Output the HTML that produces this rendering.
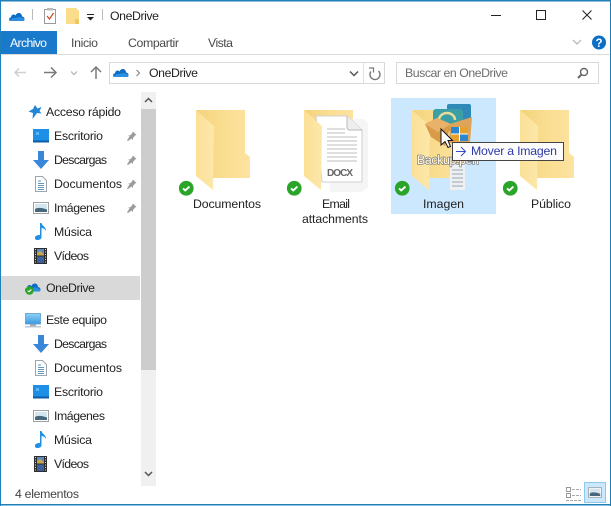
<!DOCTYPE html>
<html><head><meta charset="utf-8"><title>OneDrive</title>
<style>
html,body{margin:0;padding:0;background:#fff;overflow:hidden}
svg{display:block}
text{font-family:"Liberation Sans",sans-serif;font-size:12.3px;fill:#222}
.r{fill:#4a4a4a}
</style></head><body>
<svg width="611" height="506" viewBox="0 0 611 506" xmlns="http://www.w3.org/2000/svg">
<defs>
<linearGradient id="fb" x1="0" x2="1" y1="0" y2="0"><stop offset="0" stop-color="#f3d27a"/><stop offset=".45" stop-color="#f9dd8f"/><stop offset="1" stop-color="#fce3a0"/></linearGradient>
<linearGradient id="ff" x1="0" x2="1" y1="0" y2="0"><stop offset="0" stop-color="#fbe096"/><stop offset="1" stop-color="#fde8aa"/></linearGradient>
<linearGradient id="sky" x1="0" x2="0" y1="0" y2="1"><stop offset="0" stop-color="#8fd0f6"/><stop offset="1" stop-color="#3a9be0"/></linearGradient>
<symbol id="cloud" viewBox="0 0 16 10" overflow="visible"><path d="M1.500 10C-.5 10-.5 6.500 2 6.200C2.500 3 5.500 3 6.500 4.500C8 .5 13 1.500 13 5.500C16 5.500 16.500 10 13.500 10Z" fill="#0f6cc4"/><path d="M.500 10C1 8 4 6.500 7 7C9 5.500 12 5.500 13 7C15 7 16 8.500 15 10Z" fill="#2a8fe0"/></symbol>
<symbol id="desk" viewBox="0 0 16 14" overflow="visible"><rect x="0" y="0" width="16" height="13" fill="#1c8fe6"/><rect x="0" y="11.500" width="16" height="2" fill="#0b5ea8"/><path d="M3 3h3v3h-3z" fill="#5cb5f0"/></symbol>
<symbol id="down" viewBox="0 0 16 18" overflow="visible"><path d="M5 0h6v9h5L8 18 0 9h5z" fill="#3a86d8"/></symbol>
<symbol id="doc" viewBox="0 0 12 16" overflow="visible"><path d="M.5.500h7l4 4v11H.500z" fill="#fff" stroke="#9aa5ad"/><path d="M3 5h3M3 7.500h6M3 9.500h6M3 11.500h6M3 13.500h6" stroke="#5f95b8"/></symbol>
<symbol id="img" viewBox="0 0 16 12" overflow="visible"><rect x=".5" y=".5" width="15" height="11" fill="#fff" stroke="#9aa1a7"/><rect x="2" y="2" width="12" height="8" fill="#d3e6f0"/><path d="M2 7C5 5 10 6 14 7.500V10H2z" fill="#48677d"/></symbol>
<symbol id="note" viewBox="0 0 12 17" overflow="visible"><path d="M5 0h1.500c.5 3 4.500 3.500 4.500 8C10 6 8 5 6.500 5v9c0 2-2 3-4 3S0 16 0 14.500 2 12 5 12z" fill="#1e90e8"/></symbol>
<symbol id="film" viewBox="0 0 13 16" overflow="visible"><rect width="13" height="16" fill="#2d2d2d"/><rect x="3" y="1" width="7" height="6.500" fill="#5f86c4"/><rect x="3" y="8.500" width="7" height="6.500" fill="#3d5f9c"/><path d="M3 5l3-2 4 3v1.500H3z" fill="#c8a94a"/><path d="M1 1.500h1M1 4h1M1 6.500h1M1 9h1M1 11.500h1M1 14h1M11 1.500h1M11 4h1M11 6.500h1M11 9h1M11 11.500h1M11 14h1" stroke="#ddd"/></symbol>
<symbol id="pin" viewBox="0 0 10 10" overflow="visible"><path d="M6 .5l3.500 3.500-1.500.5-2 2.500v2L4.500 7.500 1 10 0 9.500 2.500 5.500 1 4.500h2l2-2z" fill="#9a9a9a"/></symbol>
<symbol id="check" viewBox="0 0 16 16" overflow="visible"><circle cx="8" cy="8" r="7.600" fill="#2aa52a"/><path d="M4.700 8.200L7 10.300l4.300-4" fill="none" stroke="#fff" stroke-width="2"/></symbol>
<symbol id="folder" viewBox="0 0 56 82" overflow="visible">
<path d="M0 0H49V43L54 47V68H17V60L0 60Z" fill="url(#fb)"/>
<path d="M0 0L18 16 17 80 0 66Z" fill="url(#ff)"/>
</symbol>
</defs>

<!-- window frame -->
<rect x="0" y="0" width="611" height="1.500" fill="#1f7fb9"/>
<rect x="0" y="0" width="1" height="506" fill="#1f7fb9"/>
<rect x="610" y="0" width="1" height="506" fill="#1f7fb9"/>
<rect x="0" y="504" width="611" height="1.500" fill="#1f7fb9"/>

<!-- title bar -->
<use href="#cloud" x="9" y="11" width="16" height="10"/>
<rect x="32" y="9" width="1" height="11" fill="#bbb"/>
<path d="M44.500 9.500h11v14h-11z" fill="#fff" stroke="#9a9a9a"/>
<rect x="47" y="8" width="6" height="2.500" fill="#b9b9b9"/>
<path d="M47 16l2.500 3 4-6" fill="none" stroke="#d0502d" stroke-width="1.300"/>
<path d="M66 8h10l3 3v13H66z" fill="#fbdc8a"/><path d="M75 19h4v5h-4z" fill="#efc766"/>
<rect x="87" y="14" width="7" height="1" fill="#222"/><path d="M87 17h7l-3.500 3.500z" fill="#222"/>
<rect x="102" y="9" width="1" height="11" fill="#bbb"/>
<text x="110" y="20" textLength="49">OneDrive</text>

<!-- window buttons -->
<rect x="491" y="15" width="10" height="1" fill="#222"/>
<rect x="536.500" y="10.500" width="9" height="9" fill="none" stroke="#222"/>
<path d="M582.500 10.500l9 9M591.500 10.500l-9 9" stroke="#222" stroke-width="1"/>

<!-- ribbon -->
<rect x="1" y="31" width="56" height="23" fill="#1979ca"/>
<text x="10" y="47" textLength="37" style="fill:#fff">Archivo</text>
<text class="r" x="71" y="47" textLength="27">Inicio</text>
<text class="r" x="128" y="47" textLength="51">Compartir</text>
<text class="r" x="208" y="47" textLength="25">Vista</text>
<rect x="1" y="54" width="609" height="1" fill="#dadbdc"/>
<path d="M573 40l4 4 4-4" fill="none" stroke="#b5bcc2" stroke-width="1.300"/>
<circle cx="599" cy="42.500" r="7" fill="#0b6fc6"/>
<text x="599" y="47" text-anchor="middle" style="font-size:11.500px;font-weight:bold;fill:#fff">?</text>

<!-- nav -->
<path d="M15 72.500h11M19 68.500l-4 4 4 4" fill="none" stroke="#d0d0d0" stroke-width="1.500"/>
<path d="M44 72.500h12M51 67.500l5 5-5 5" fill="none" stroke="#7a7a7a" stroke-width="1.500"/>
<path d="M71 71.500l3 3 3-3" fill="none" stroke="#b0b0b0" stroke-width="1.200"/>
<path d="M96 79V67M91 72l5-5 5 5" fill="none" stroke="#7a7a7a" stroke-width="1.500"/>
<rect x="109.500" y="62.500" width="275" height="21" fill="#fff" stroke="#d9d9d9"/>
<use href="#cloud" x="113" y="67" width="16" height="10"/>
<path d="M136.500 70l3 3-3 3" fill="none" stroke="#8a8a8a" stroke-width="1.200"/>
<text x="149" y="77" textLength="49">OneDrive</text>
<path d="M350 71.500l4 4 4-4" fill="none" stroke="#555" stroke-width="1.500"/>
<rect x="363" y="63" width="1" height="20" fill="#e2e2e2"/>
<path d="M378.500 70A5 5 0 1 1 371 70.500" fill="none" stroke="#777" stroke-width="1.400" transform="translate(0,1)"/>
<path d="M369 68h4.500v4.500" fill="none" stroke="#777" stroke-width="1.200"/>
<rect x="396.500" y="62.500" width="202" height="21" fill="#fff" stroke="#d9d9d9"/>
<text x="405" y="77" textLength="103" style="fill:#6d6d6d">Buscar en OneDrive</text>
<circle cx="584" cy="72" r="3.500" fill="none" stroke="#666" stroke-width="1.400"/>
<path d="M581.500 74.500L578 78" stroke="#666" stroke-width="2"/>

<!-- sidebar -->
<rect x="1" y="276" width="139" height="24" fill="#d9d9d9"/>
<rect x="141" y="92" width="15" height="394" fill="#f0f0f0"/>
<rect x="141" y="109" width="15" height="261" fill="#cdcdcd"/>
<path d="M145 102l3.500-3.500 3.500 3.500" fill="none" stroke="#555" stroke-width="1.500"/>
<path d="M145 472l3.500 3.500 3.500-3.500" fill="none" stroke="#555" stroke-width="1.500"/>

<path d="M35 105l2.500 3.500 4-1.500-2 4 2 2.500-4.500-.5-4.500 6 .5-6-4.500-1.500 4.500-2.500z" fill="#1f86d8"/>
<text x="46" y="116" textLength="75">Acceso rápido</text>
<use href="#desk" x="33" y="129" width="16" height="14"/><text x="54" y="140" textLength="49">Escritorio</text><use href="#pin" x="127" y="131" width="10" height="10"/>
<use href="#down" x="33" y="151" width="16" height="18"/><text x="54" y="164" textLength="53">Descargas</text><use href="#pin" x="127" y="155" width="10" height="10"/>
<use href="#doc" x="35" y="176" width="12" height="16"/><text x="54" y="188" textLength="68">Documentos</text><use href="#pin" x="127" y="179" width="10" height="10"/>
<use href="#img" x="33" y="202" width="16" height="12"/><text x="54" y="212" textLength="51">Imágenes</text><use href="#pin" x="127" y="203" width="10" height="10"/>
<use href="#note" x="35" y="223" width="12" height="17"/><text x="54" y="236" textLength="38">Música</text>
<use href="#film" x="34" y="248" width="13" height="16"/><text x="54" y="260" textLength="35">Vídeos</text>

<use href="#cloud" x="25" y="281" width="16" height="11"/>
<use href="#check" x="25" y="286" width="9" height="9"/>
<text x="46" y="292" textLength="49">OneDrive</text>

<rect x="25.500" y="313.500" width="15" height="10.500" fill="url(#sky)" stroke="#5a9fd0" stroke-width=".8"/>
<rect x="30" y="324" width="6" height="2" fill="#9ab"/>
<rect x="25" y="326" width="16" height="1.500" fill="#bcc7d0"/>
<text x="46" y="324" textLength="61">Este equipo</text>
<use href="#down" x="33" y="335" width="16" height="18"/><text x="54" y="348" textLength="53">Descargas</text>
<use href="#doc" x="35" y="360" width="12" height="16"/><text x="54" y="372" textLength="68">Documentos</text>
<use href="#desk" x="33" y="385" width="16" height="14"/><text x="54" y="396" textLength="49">Escritorio</text>
<use href="#img" x="33" y="410" width="16" height="12"/><text x="54" y="420" textLength="51">Imágenes</text>
<use href="#note" x="35" y="431" width="12" height="17"/><text x="54" y="444" textLength="38">Música</text>
<use href="#film" x="34" y="456" width="13" height="16"/><text x="54" y="468" textLength="35">Vídeos</text>

<!-- status -->
<text x="15" y="498" textLength="64" style="fill:#444">4 elementos</text>
<path d="M566.500 487.500h4v4h-4zM566.500 493.500h4v4h-4z" fill="none" stroke="#999"/>
<path d="M572 489.500h9M572 495.500h9M566 500.500h15" stroke="#aaa" stroke-dasharray="3 1" fill="none"/>
<rect x="584.500" y="482.500" width="21" height="20" fill="#cce8ff" stroke="#8cc9f0"/>
<use href="#img" x="588" y="487" width="14" height="11"/>

<!-- selection -->
<rect x="391" y="98" width="105" height="116" fill="#cce8ff"/>

<!-- folder 1 -->
<use href="#folder" x="196" y="110" width="56" height="82"/>
<use href="#check" x="178.500" y="180.500" width="15.500" height="15.500"/>
<text x="193" y="208" textLength="68">Documentos</text>

<!-- folder 2 -->
<path d="M304 110H353V178H322L304 170Z" fill="url(#fb)"/>
<path d="M322 119H364L368 123V187L362 192H330Z" fill="#f1f1f1" opacity=".7"/>
<path d="M316 116H347L362 130V182H322Z" fill="#fff" stroke="#d0d0d0"/>
<path d="M347 116V127q0 3 3 3H362" fill="#eee" stroke="#bbb"/>
<path d="M327 129H345M327 133H345M327 137H357M327 141H357M327 145H357M327 149H357M327 153H357M327 157H357M327 161H357" stroke="#bdbdbd" stroke-width="1"/>
<text x="327" y="176" textLength="26" style="font-size:10px;font-weight:bold;fill:#666">DOCX</text>
<path d="M304 110L322 126 321 190 304 176Z" fill="url(#ff)"/>
<use href="#check" x="286.500" y="180.500" width="15.500" height="15.500"/>
<text x="322" y="208" textLength="28">Email</text>
<text x="302" y="223" textLength="66">attachments</text>

<!-- folder 3 (selected, drag image) -->
<use href="#folder" x="412" y="110" width="56" height="82"/>
<path d="M450 164h15v26h-15z" fill="#edf1f3"/>
<path d="M452 170h11M452 174h11M452 178h11M452 182h11M452 186h11" stroke="#9aa5ac"/>
<rect x="447" y="104" width="24" height="22" rx="2" fill="#2f8ab8"/>
<rect x="433" y="109" width="30" height="22" rx="3" fill="#3d9fa6"/>
<path d="M439 120a8 7 0 0 1 16 0" fill="none" stroke="#e8dc9a" stroke-width="2.500"/>
<path d="M425 124L437 118 451 124 445 146 431 137Z" fill="#d99a4a"/>
<path d="M425 124L437 118 451 124 438 132Z" fill="#e8b26a"/>
<path d="M450 124L472 117 470 143 449 143Z" fill="#dda55a"/>
<path d="M451 127H468V141H451Z" fill="#fff"/>
<rect x="451" y="127" width="8" height="6.500" fill="#2d86d0"/><rect x="460" y="127" width="8" height="6.500" fill="#e8a12c"/><rect x="451" y="134.500" width="8" height="6.500" fill="#e8a12c"/><rect x="460" y="134.500" width="8" height="6.500" fill="#2d86d0"/>
<path d="M441 129V145L445 141.500 448 147.500 450.500 146.500 448 140.500H452.500Z" fill="#fff" stroke="#111"/>
<text x="417" y="164" textLength="62" style="fill:#fff;opacity:.85;paint-order:stroke;stroke:#777;stroke-width:1.500px">Backup.pen</text>
<use href="#check" x="394.500" y="180.500" width="15.500" height="15.500"/>
<text x="423" y="208" textLength="41">Imagen</text>

<!-- folder 4 -->
<use href="#folder" x="520" y="110" width="56" height="82"/>
<use href="#check" x="502.500" y="180.500" width="15.500" height="15.500"/>
<text x="531" y="208" textLength="40">Público</text>

<!-- drag tooltip -->
<rect x="452.500" y="142.500" width="111" height="18" fill="#fcfcfc" stroke="#444"/>
<path d="M456 151.500H465M461 147l4.500 4.500-4.500 4.500" fill="none" stroke="#3a4cc0" stroke-width="1"/>
<text x="471" y="155" textLength="86" style="fill:#2f3aa8">Mover a Imagen</text>
</svg>
</body></html>
